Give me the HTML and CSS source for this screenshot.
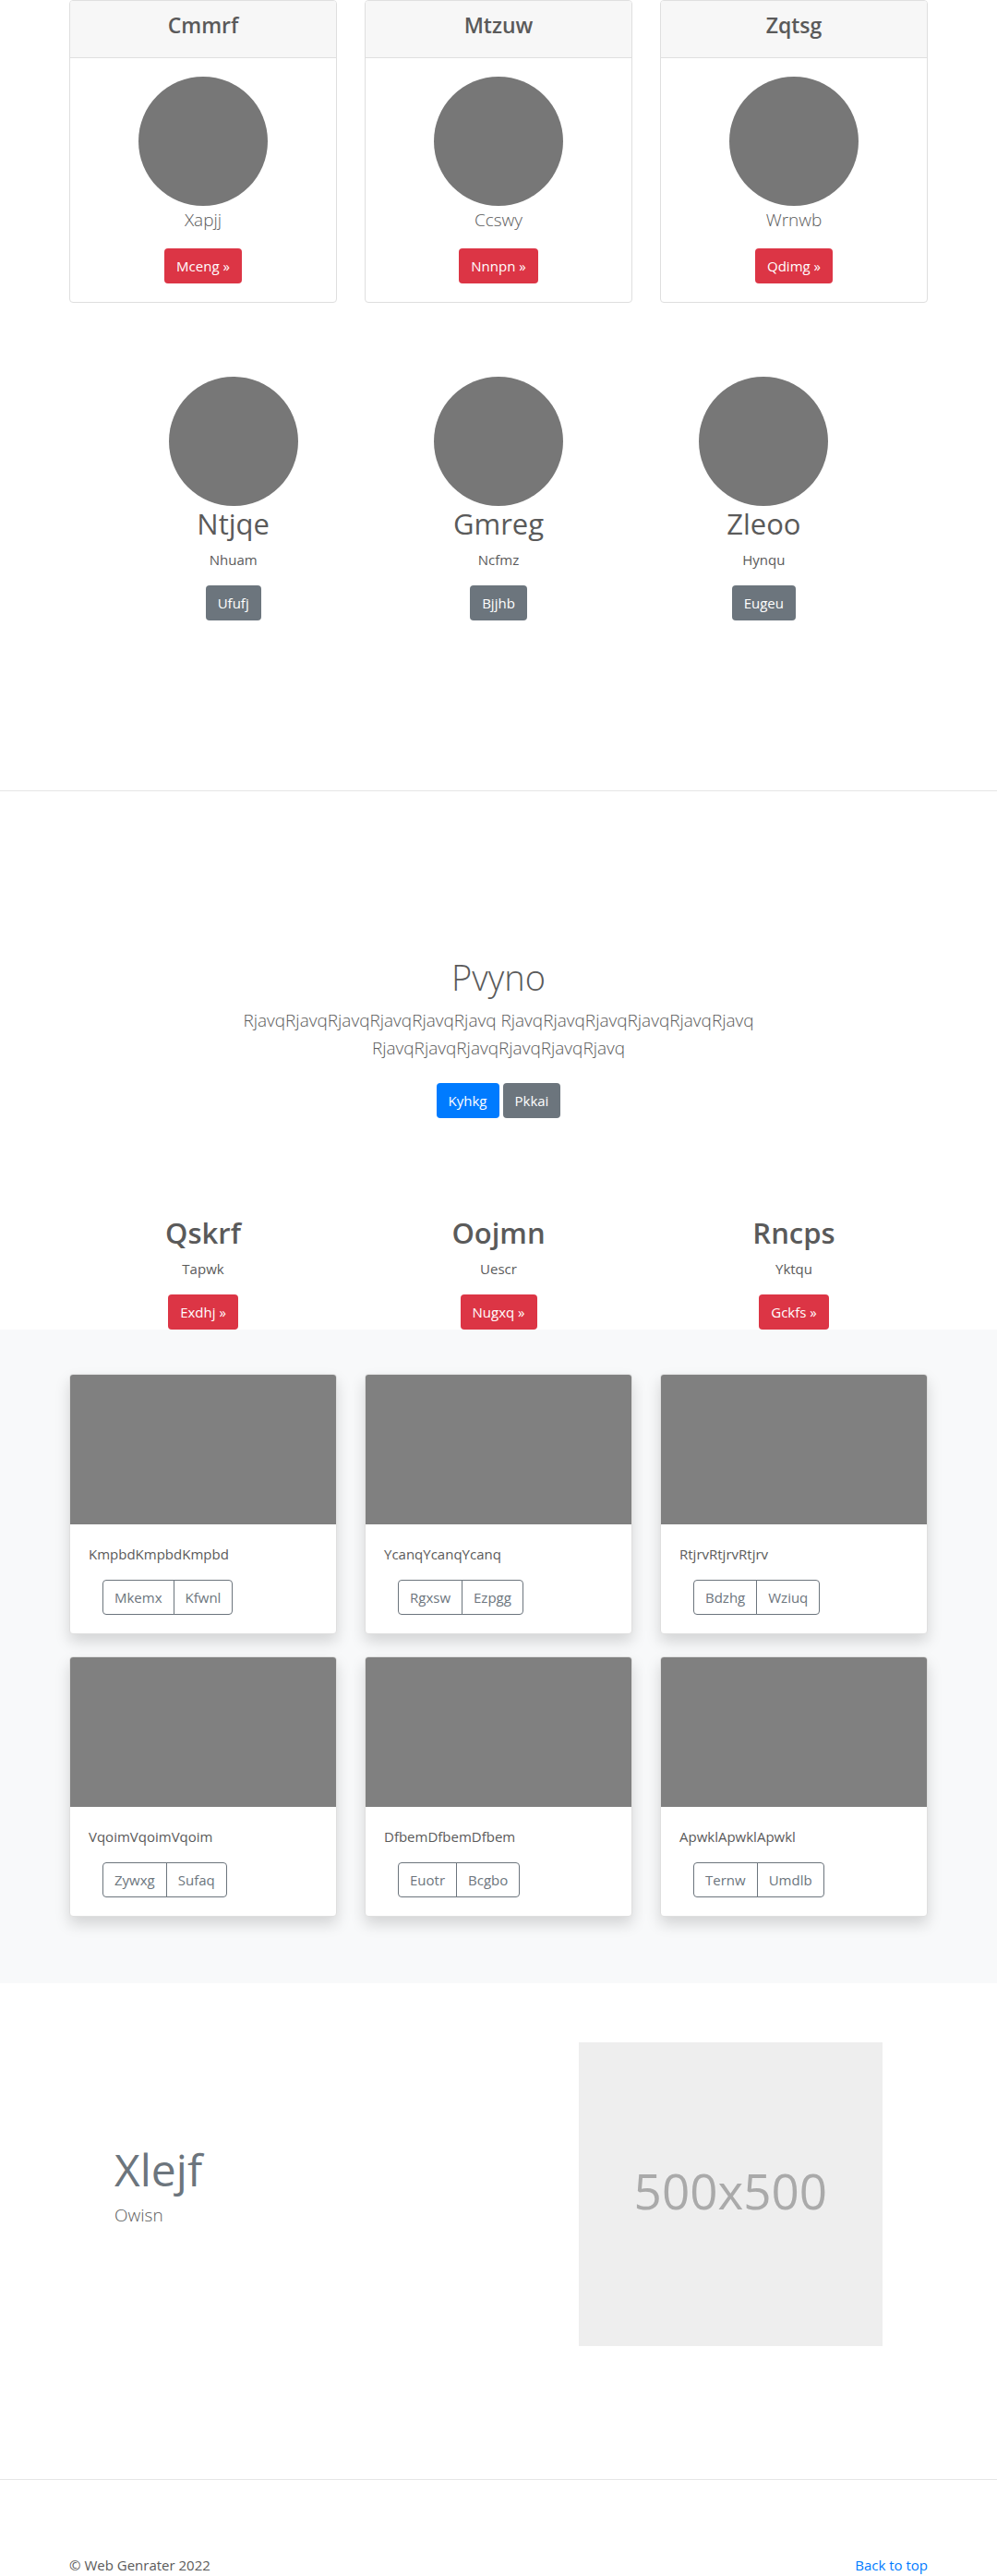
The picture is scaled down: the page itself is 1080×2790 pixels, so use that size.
FILE: index.html
```html
<!DOCTYPE html>
<html lang="en">
<head>
<meta charset="utf-8">
<meta name="viewport" content="width=device-width, initial-scale=1">
<title>Web Genrater</title>
<link rel="stylesheet" href="styles.css">
</head>
<body id="top">
<main>
  <section class="container grid plans">
    <article class="card">
      <header class="card-header"><h4>Cmmrf</h4></header>
      <div class="card-body"><div class="avatar"></div><p class="lead">Xapjj</p><button class="btn danger" type="button">Mceng »</button></div>
    </article>
    <article class="card">
      <header class="card-header"><h4>Mtzuw</h4></header>
      <div class="card-body"><div class="avatar"></div><p class="lead">Ccswy</p><button class="btn danger" type="button">Nnnpn »</button></div>
    </article>
    <article class="card">
      <header class="card-header"><h4>Zqtsg</h4></header>
      <div class="card-body"><div class="avatar"></div><p class="lead">Wrnwb</p><button class="btn danger" type="button">Qdimg »</button></div>
    </article>
  </section>

  <section class="inner people">
    <article><div class="avatar"></div><h2>Ntjqe</h2><p>Nhuam</p><button class="btn secondary" type="button">Ufufj</button></article>
    <article><div class="avatar"></div><h2>Gmreg</h2><p>Ncfmz</p><button class="btn secondary" type="button">Bjjhb</button></article>
    <article><div class="avatar"></div><h2>Zleoo</h2><p>Hynqu</p><button class="btn secondary" type="button">Eugeu</button></article>
  </section>

  <hr>

  <section class="intro">
    <h1>Pvyno</h1>
    <p class="lead">RjavqRjavqRjavqRjavqRjavqRjavq RjavqRjavqRjavqRjavqRjavqRjavq RjavqRjavqRjavqRjavqRjavqRjavq</p>
    <div class="actions"><button class="btn primary" type="button">Kyhkg</button><button class="btn secondary" type="button">Pkkai</button></div>
  </section>

  <section class="container grid topics">
    <article><h2>Qskrf</h2><p>Tapwk</p><button class="btn danger" type="button">Exdhj »</button></article>
    <article><h2>Oojmn</h2><p>Uescr</p><button class="btn danger" type="button">Nugxq »</button></article>
    <article><h2>Rncps</h2><p>Yktqu</p><button class="btn danger" type="button">Gckfs »</button></article>
  </section>

  <section class="album">
    <div class="container grid">
      <article class="card tile"><div class="thumb"></div><div class="tile-body"><p>KmpbdKmpbdKmpbd</p><div class="group"><button class="btn outline" type="button">Mkemx</button><button class="btn outline" type="button">Kfwnl</button></div></div></article>
      <article class="card tile"><div class="thumb"></div><div class="tile-body"><p>YcanqYcanqYcanq</p><div class="group"><button class="btn outline" type="button">Rgxsw</button><button class="btn outline" type="button">Ezpgg</button></div></div></article>
      <article class="card tile"><div class="thumb"></div><div class="tile-body"><p>RtjrvRtjrvRtjrv</p><div class="group"><button class="btn outline" type="button">Bdzhg</button><button class="btn outline" type="button">Wziuq</button></div></div></article>
      <article class="card tile"><div class="thumb"></div><div class="tile-body"><p>VqoimVqoimVqoim</p><div class="group"><button class="btn outline" type="button">Zywxg</button><button class="btn outline" type="button">Sufaq</button></div></div></article>
      <article class="card tile"><div class="thumb"></div><div class="tile-body"><p>DfbemDfbemDfbem</p><div class="group"><button class="btn outline" type="button">Euotr</button><button class="btn outline" type="button">Bcgbo</button></div></div></article>
      <article class="card tile"><div class="thumb"></div><div class="tile-body"><p>ApwklApwklApwkl</p><div class="group"><button class="btn outline" type="button">Ternw</button><button class="btn outline" type="button">Umdlb</button></div></div></article>
    </div>
  </section>

  <section class="inner feature">
    <div class="feature-text"><h2>Xlejf</h2><p class="lead">Owisn</p></div>
    <div class="placeholder">500x500</div>
  </section>

  <hr>
</main>
<footer class="container footer"><p>© Web Genrater 2022</p><a href="#top">Back to top</a></footer>
</body>
</html>
```
FILE: styles.css
```css
* { box-sizing: border-box; }

body {
  margin: 0;
  background: #fff;
  color: #5a5a5a;
  font-family: "Segoe UI", "Open Sans", "Noto Sans", sans-serif;
  font-size: 15px;
  line-height: 24px;
}

h1, h2, h4 { margin: 0 0 8px; }
h1 { font-size: 38px; font-weight: 300; line-height: 48px; }
h2 { font-size: 31px; font-weight: 400; line-height: 38px; }
h4 { font-size: 23px; font-weight: 600; line-height: 29px; }
p { margin: 0 0 16px; }
.lead { font-size: 19px; font-weight: 300; line-height: 30px; }

hr {
  margin: 0;
  border: 0;
  border-top: 1px solid #e5e5e5;
}

.container, .inner {
  width: 100%;
  max-width: 960px;
  margin: 0 auto;
  padding: 0 15px;
}
.inner { max-width: 862px; }

.grid {
  display: grid;
  grid-template-columns: repeat(3, 1fr);
  gap: 24px 30px;
}

.btn {
  height: 38px;
  padding: 0 12px;
  border: 1px solid transparent;
  border-radius: 4px;
  color: #fff;
  font: inherit;
  cursor: pointer;
}
.danger { background: #dc3545; }
.secondary { background: #6c757d; }
.primary { background: #007bff; }
.outline { background: transparent; border-color: #6c757d; color: #6c757d; }

.avatar {
  width: 140px;
  height: 140px;
  margin: 0 auto;
  border-radius: 50%;
  background: #777;
}

.card {
  border: 1px solid #dfdfdf;
  border-radius: 4px;
  background: #fff;
}
.card-header {
  padding: 12px 20px;
  border-bottom: 1px solid #dfdfdf;
  border-radius: 3px 3px 0 0;
  background: #f7f7f7;
}
.card-body { padding: 20px; }
.plans, .people, .intro, .topics { text-align: center; }

.people {
  display: grid;
  grid-template-columns: repeat(3, 1fr);
  padding: 80px 0 184px;
}

.intro {
  max-width: 592px;
  margin: 0 auto;
  padding: 177px 15px 105px;
}
.actions {
  display: flex;
  justify-content: center;
  gap: 4px;
  padding-top: 7px;
}

.topics h2 { font-weight: 600; }

.album {
  padding: 48px 0 72px;
  background: #f8f9fa;
}
.tile { box-shadow: 0 8px 16px rgba(0, 0, 0, 0.15); }
.thumb {
  height: 162px;
  border-radius: 3px 3px 0 0;
  background: #808080;
}
.tile-body { padding: 20px; }
.group { display: flex; padding: 0 15px; }
.group .btn:first-child { border-radius: 4px 0 0 4px; }
.group .btn:last-child { margin-left: -1px; border-radius: 0 4px 4px 0; }

.feature {
  display: grid;
  grid-template-columns: repeat(12, 1fr);
  column-gap: 30px;
  align-items: center;
  padding-top: 64px;
  padding-bottom: 144px;
}
.feature-text { grid-column: span 7; }
.feature h2 {
  margin: 0 0 4px;
  color: #6c757d;
  font-size: 48px;
  line-height: 60px;
}
.feature .lead { margin: 0 0 20px; }
.placeholder {
  display: flex;
  grid-column: span 5;
  align-items: center;
  justify-content: center;
  aspect-ratio: 1;
  padding-bottom: 8px;
  background: #eee;
  color: #aaa;
  font-size: 53px;
}

.footer {
  display: flex;
  justify-content: space-between;
  padding-top: 80px;
}
.footer p { margin: 0; }
.footer a { color: #007bff; text-decoration: none; }
```
